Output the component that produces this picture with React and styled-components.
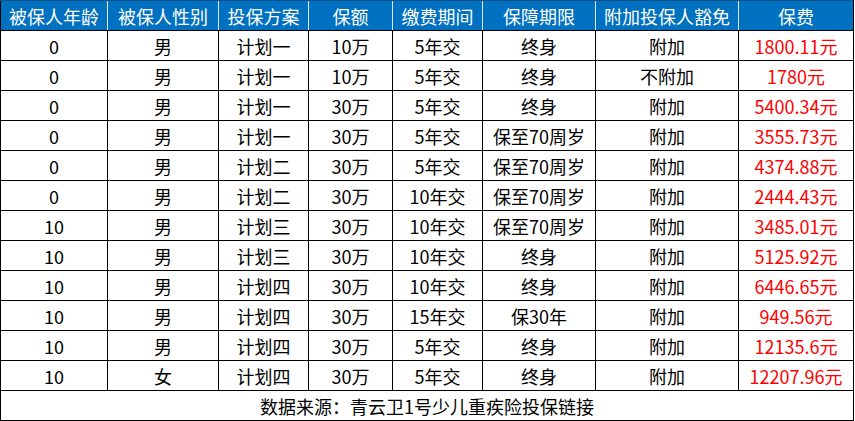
import React from "react";
import styled, { createGlobalStyle } from "styled-components";

// Tabellendaten
const columns = [
  { title: "被保人年龄", width: 107 },
  { title: "被保人性别", width: 111 },
  { title: "投保方案", width: 90 },
  { title: "保额", width: 84 },
  { title: "缴费期间", width: 90 },
  { title: "保障期限", width: 113 },
  { title: "附加投保人豁免", width: 143 },
  { title: "保费", width: 115 },
];

const rows = [
  ["0", "男", "计划一", "10万", "5年交", "终身", "附加", "1800.11元"],
  ["0", "男", "计划一", "10万", "5年交", "终身", "不附加", "1780元"],
  ["0", "男", "计划一", "30万", "5年交", "终身", "附加", "5400.34元"],
  ["0", "男", "计划一", "30万", "5年交", "保至70周岁", "附加", "3555.73元"],
  ["0", "男", "计划二", "30万", "5年交", "保至70周岁", "附加", "4374.88元"],
  ["0", "男", "计划二", "30万", "10年交", "保至70周岁", "附加", "2444.43元"],
  ["10", "男", "计划三", "30万", "10年交", "保至70周岁", "附加", "3485.01元"],
  ["10", "男", "计划三", "30万", "10年交", "终身", "附加", "5125.92元"],
  ["10", "男", "计划四", "30万", "10年交", "终身", "附加", "6446.65元"],
  ["10", "男", "计划四", "30万", "15年交", "保30年", "附加", "949.56元"],
  ["10", "男", "计划四", "30万", "5年交", "终身", "附加", "12135.6元"],
  ["10", "女", "计划四", "30万", "5年交", "终身", "附加", "12207.96元"],
];

function App() {
  return (
    <>
      <GlobalStyle />
      <Table>
        <colgroup>
          {columns.map((c) => (
            <Col key={c.title} $width={c.width} />
          ))}
        </colgroup>
        <thead>
          <Row>
            {columns.map((c) => (
              <HeadCell key={c.title}>{c.title}</HeadCell>
            ))}
          </Row>
        </thead>
        <tbody>
          {rows.map((row, i) => (
            <Row key={i}>
              {row.map((value, j) => (
                <Cell key={j} $price={j === row.length - 1}>
                  {value}
                </Cell>
              ))}
            </Row>
          ))}
          <Row>
            <Cell colSpan={columns.length}>数据来源：青云卫1号少儿重疾险投保链接</Cell>
          </Row>
        </tbody>
      </Table>
    </>
  );
}

const GlobalStyle = createGlobalStyle`
  html, body {
    margin: 0;
    padding: 0;
    background: #ffffff;
  }
  body {
    font-family: "Noto Sans CJK SC", "Noto Sans", sans-serif;
  }
`;

const Table = styled.table`
  width: 854px;
  table-layout: fixed;
  border-collapse: collapse;
  font-size: 18px;
  line-height: 20px;
  color: #000000;
`;

const Col = styled.col`
  width: ${(p) => p.$width}px;
`;

const Row = styled.tr`
  height: 30px;
`;

const HeadCell = styled.th`
  padding: 0;
  background: #0070c0;
  color: #ffffff;
  font-weight: 400;
  text-align: center;
  vertical-align: middle;
  white-space: nowrap;
  border-top: 1px solid #0b4f86;
  border-left: 1px solid #dce8f3;
  border-bottom: 1px solid #000000;
  &:first-child {
    border-left: 1px solid #000000;
  }
  &:last-child {
    border-right: 1px solid #000000;
  }
`;

const Cell = styled.td`
  padding: 0;
  border: 1px solid #000000;
  text-align: center;
  vertical-align: middle;
  white-space: nowrap;
  color: ${(p) => (p.$price ? "#ff0000" : "#000000")};
`;

export default App;
